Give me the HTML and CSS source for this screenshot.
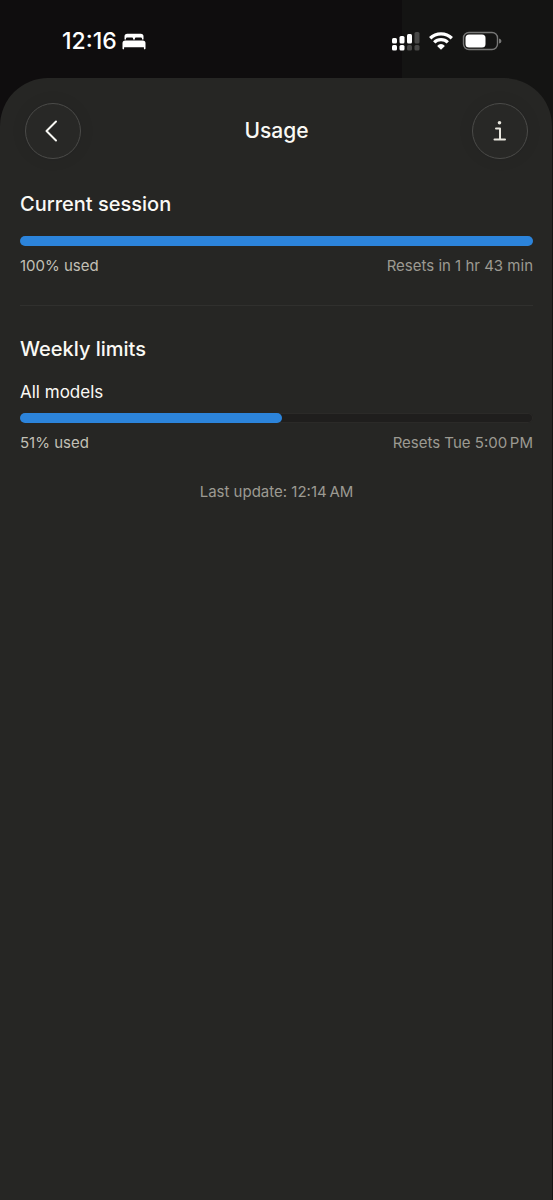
FILE: index.html
```html
<!DOCTYPE html>
<html lang="en">
<head>
<meta charset="utf-8">
<meta name="viewport" content="width=device-width, initial-scale=1">
<title>Usage</title>
<link rel="stylesheet" href="styles.css">
</head>
<body>
<div class="screen">
  <div class="status">
    <div class="status-time">
      <span class="clock">12:16</span>
      <svg class="bed" width="24" height="17" viewBox="0 0 24 17" role="img" aria-label="Sleep focus">
        <path fill="currentColor" d="M2.5 6.5V3.5Q2.5 .8 5.2 .8H18.8Q21.5 .8 21.5 3.5V6.5H20V5.6Q20 4.5 18.9 4.5H14Q12.9 4.5 12.9 5.6V6.5H11.1V5.6Q11.1 4.5 10 4.5H5.1Q4 4.5 4 5.6V6.5Z"/>
        <path fill="currentColor" d="M3.2 7.6H20.8Q23.5 7.6 23.5 10.3V15.6Q23.5 16.4 22.7 16.4Q21.9 16.4 21.9 15.6V14.2H2.1V15.6Q2.1 16.4 1.3 16.4Q.5 16.4 .5 15.6V10.3Q.5 7.6 3.2 7.6Z"/>
      </svg>
    </div>
    <div class="status-icons">
      <svg width="28" height="20" viewBox="0 0 28 20" role="img" aria-label="Signal">
        <g fill="#fff">
          <rect x="0" y="7" width="5" height="5.500" rx="1.5"/>
          <rect x="7.500" y="5" width="5" height="7.500" rx="1.5"/>
          <rect x="15" y="3" width="5" height="9.500" rx="1.5"/>
          <rect x="0" y="14" width="5" height="5.500" rx="1.5"/>
          <rect x="7.500" y="14" width="5" height="5.500" rx="1.5"/>
        </g>
        <g fill="#484847">
          <rect x="22.500" y="1" width="5" height="11.500" rx="1.5"/>
          <rect x="15" y="14" width="5" height="5.500" rx="1.5"/>
          <rect x="22.500" y="14" width="5" height="5.500" rx="1.5"/>
        </g>
      </svg>
      <svg width="24" height="18" viewBox="0 0 24 18" role="img" aria-label="Wi-Fi">
        <g fill="none" stroke="#fff" stroke-width="3.300">
          <path d="M1.2 6.2Q5.6 1.900 12 1.900T22.8 6.2"/>
          <path d="M5.2 10.400Q8 7.700 12 7.700T18.8 10.400"/>
        </g>
        <path fill="#fff" d="M12 17.8 8.100 14Q9.8 12.100 12 12.100T15.900 14Z"/>
      </svg>
      <svg width="40" height="20" viewBox="0 0 40 20" role="img" aria-label="Battery">
        <rect x="1.500" y="1.5" width="34" height="17" rx="5.5" fill="none" stroke="#777776" stroke-width="1.4"/>
        <rect x="3.500" y="3.5" width="20" height="13" rx="3.5" fill="#fff"/>
        <path d="M37 7.5Q39.500 8 39.500 10T37 12.5Z" fill="#777776"/>
      </svg>
    </div>
  </div>

  <main class="sheet">
    <header class="header">
      <button class="round" type="button" aria-label="Back">
        <svg width="16" height="22" viewBox="0 0 16 22"><path d="M11 1.500 1.500 11l9.500 9.500" fill="none" stroke="#f8f8f4" stroke-width="2" stroke-linecap="round" stroke-linejoin="round"/></svg>
      </button>
      <h1 class="title">Usage</h1>
      <button class="round" type="button" aria-label="Information">
        <svg width="14" height="22" viewBox="0 0 14 22"><path d="M3 8.500H7V19.500M1.500 19.500H12" fill="none" stroke="#e8e6de" stroke-width="2" stroke-linecap="round" stroke-linejoin="round"/><circle cx="6.500" cy="2.800" r="1.800" fill="#e8e6de"/></svg>
      </button>
    </header>

    <section class="section">
      <h2 class="heading">Current session</h2>
      <div class="bar" role="progressbar" aria-label="Current session" aria-valuenow="100"><div class="fill" style="width:100%"></div></div>
      <div class="caption"><span class="used">100% used</span><span>Resets in 1 hr 43 min</span></div>
    </section>

    <section class="section section-weekly">
      <h2 class="heading">Weekly limits</h2>
      <h3 class="label">All models</h3>
      <div class="bar" role="progressbar" aria-label="All models" aria-valuenow="51"><div class="fill" style="width:51%"></div></div>
      <div class="caption"><span class="used">51% used</span><span>Resets Tue 5:00&#8239;PM</span></div>
    </section>

    <p class="updated">Last update: 12:14&#8239;AM</p>
  </main>
</div>
</body>
</html>
```
FILE: styles.css
```css
* {
  box-sizing: border-box;
}

body {
  margin: 0;
  background: #0f0d0e;
  color: #faf9f5;
  font-family: Inter, "Liberation Sans", sans-serif;
}

h1, h2, h3, p {
  margin: 0;
}

.screen {
  display: flex;
  flex-direction: column;
  min-height: 100vh;
  background: linear-gradient(to left, #141413 151px, #0f0d0e 151px);
}

.status {
  display: flex;
  justify-content: space-between;
  align-items: center;
  height: 78px;
  padding: 4px 51px 0 62px;
}

.status-time {
  display: flex;
  align-items: center;
  gap: 5px;
  color: #fff;
}

.clock {
  font-size: 23px;
  font-weight: 500;
  line-height: 28px;
}

.status-icons {
  display: flex;
  align-items: center;
  gap: 9px;
}

.sheet {
  flex: 1;
  margin-right: 1px;
  padding: 25px 19px 25px 20px;
  border-radius: 48px 48px 0 0;
  background: #262624;
}

.header {
  display: flex;
  justify-content: space-between;
  align-items: center;
  padding: 0 5px;
}

.title {
  font-size: 21px;
  font-weight: 500;
  line-height: 28px;
}

.round {
  display: flex;
  align-items: center;
  justify-content: center;
  width: 56px;
  height: 56px;
  padding: 0;
  border: 1px solid #4b4b49;
  border-radius: 50%;
  background: #282826;
  box-shadow: 0 0 16px rgba(0, 0, 0, 0.08);
}

.section {
  padding-top: 31px;
}

.section-weekly {
  margin-top: 29px;
  padding-top: 29px;
  border-top: 1px solid #30302e;
}

.heading {
  font-size: 20px;
  font-weight: 500;
  line-height: 28px;
}

.label {
  margin-top: 17px;
  font-size: 17px;
  font-weight: 400;
  line-height: 24px;
}

.bar {
  height: 10px;
  margin-top: 18px;
  border-radius: 5px;
  background: #1f1e1d;
  box-shadow: inset 0 0 0 1px #2b2a28;
}

.label + .bar {
  margin-top: 9px;
}

.fill {
  height: 100%;
  border-radius: 5px;
  background: #2c84db;
}

.caption {
  display: flex;
  justify-content: space-between;
  margin-top: 10px;
  color: #9c9a92;
  font-size: 15px;
  line-height: 20px;
}

.used {
  color: #c2c0b6;
}

.updated {
  margin-top: 29px;
  color: #9c9a92;
  font-size: 15px;
  line-height: 20px;
  text-align: center;
}
```
